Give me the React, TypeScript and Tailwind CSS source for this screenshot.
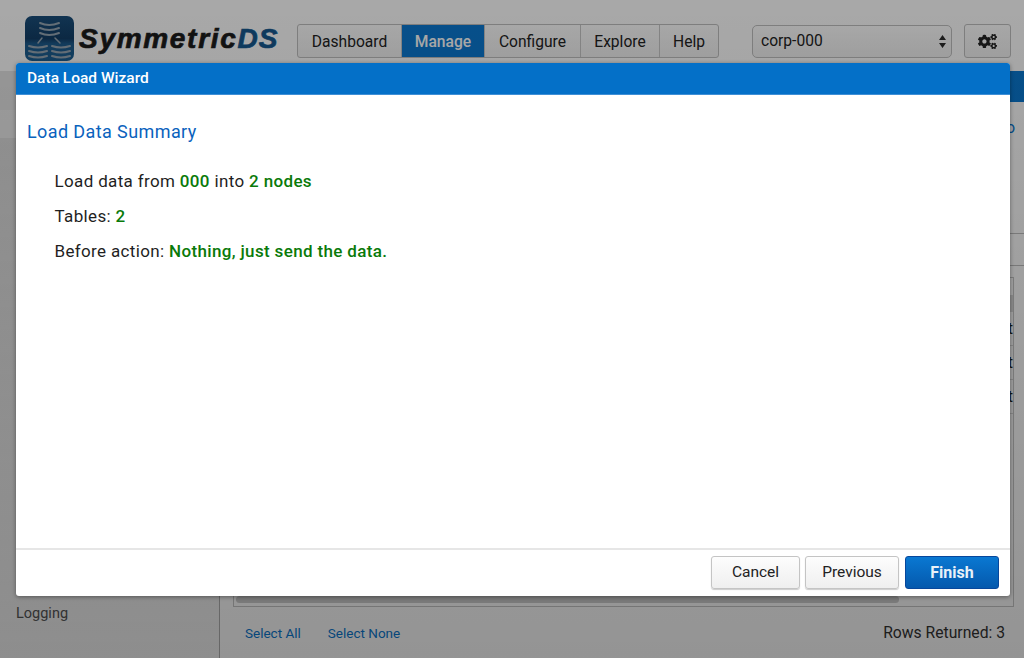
import { FaCogs } from "react-icons/fa";

const NAV_ITEMS = [
  { label: "Dashboard", width: "w-[104px]" },
  { label: "Manage", width: "w-[83px]" },
  { label: "Configure", width: "w-[96px]" },
  { label: "Explore", width: "w-[79px]" },
  { label: "Help", width: "w-[58px]" },
];

function LogoMark() {
  return (
    <svg width="49" height="45" viewBox="0 0 49 45" className="shrink-0">
      <defs>
        <linearGradient id="logoBg" x1="0" y1="0" x2="0" y2="1">
          <stop offset="0" stopColor="#1a4f7c" />
          <stop offset="0.5" stopColor="#123d66" />
          <stop offset="0.62" stopColor="#1d5b8c" />
          <stop offset="1" stopColor="#1c5f92" />
        </linearGradient>
      </defs>
      <rect x="0" y="0" width="49" height="45" rx="7" fill="url(#logoBg)" />
      <g fill="none" stroke="#97a7b4" strokeWidth="2" strokeLinecap="round">
        <path d="M15 7q9 4 19 0M15 12q9 4 19 0M15 17q9 4 19 0" />
        <path d="M4 30q9 3 18 0M4 35q9 3 18 0M4 40q9 3 18 0" />
        <path d="M27 30q9 3 18 0M27 35q9 3 18 0M27 40q9 3 18 0" />
        <path d="M17 22l-4 5M30 22l5 5" strokeWidth="1.5" />
      </g>
    </svg>
  );
}

function SelectArrows() {
  return (
    <svg width="7" height="13" viewBox="0 0 7 13" className="shrink-0">
      <path d="M3.5 0L7 5H0zM3.5 13L0 8h7z" fill="#2b2b2b" />
    </svg>
  );
}

function Button({ label, primary }: { label: string; primary?: boolean }) {
  return (
    <button
      className={
        primary
          ? "h-[33px] w-[94px] rounded-[3px] border border-[#07479c] bg-gradient-to-b from-[#0a78d2] to-[#0559ad] pt-[1px] text-[16px] font-bold text-[#e8f1f8]"
          : "h-[33px] w-full rounded-[3px] border border-[#c4c4c4] bg-gradient-to-b from-[#fdfdfd] to-[#efefef] pt-[1px] text-[15.5px] text-[#222] shadow-[0_1px_1px_rgba(0,0,0,0.2)]"
      }
    >
      {label}
    </button>
  );
}

export default function App() {
  return (
    <div className="relative h-[658px] w-[1024px] overflow-hidden bg-white font-['Roboto',sans-serif] text-[#222]">
      <header className="flex h-[71px] items-start pl-[25px] pt-[16px]">
        <LogoMark />
        <div className="ml-[5px] mt-[5px] w-[218px] whitespace-nowrap font-['Liberation_Sans',sans-serif] text-[28px] leading-[36px] font-bold italic [-webkit-text-stroke:0.7px_currentColor]">
          <span className="tracking-[1.7px] text-[#1b1b1b]">Symmetric</span>
          <span className="tracking-[1px] text-[#15588f]">DS</span>
        </div>
        <nav className="mt-[8px] flex h-[34px] overflow-hidden rounded-[3px] border border-[#c0c0c0] bg-gradient-to-b from-white to-[#f2f2f2] text-[15.6px]">
          {NAV_ITEMS.map((item) => (
            <div
              key={item.label}
              className={
                item.label === "Manage"
                  ? `flex items-center justify-center border-r border-[#c8c8c8] bg-[#0a79d2] pt-[3px] font-medium text-white ${item.width}`
                  : `flex items-center justify-center border-r border-[#c8c8c8] pt-[3px] last:border-r-0 ${item.width}`
              }
            >
              {item.label}
            </div>
          ))}
        </nav>
        <div className="ml-[33px] mt-[9px] flex h-[33px] w-[200px] items-center justify-between rounded-[5px] border border-[#c0c0c0] bg-gradient-to-b from-white to-[#f2f2f2] pl-[8px] pr-[5px] text-[15.6px]">
          <span className="pt-[1px]">corp-000</span>
          <SelectArrows />
        </div>
        <div className="ml-[12px] mt-[8px] flex h-[34px] w-[47px] items-center justify-center rounded-[3px] border border-[#c0c0c0] bg-gradient-to-b from-white to-[#f2f2f2]">
          <FaCogs size={19} color="#222" />
        </div>
      </header>

      <div className="flex h-[587px]">
        <aside className="flex w-[220px] shrink-0 flex-col border-r border-[#b0b0b0]">
          <div className="h-[39px] bg-[#e5e5e5]" />
          <div className="h-[28px] bg-[#ececec]" />
          <div className="flex-1 bg-gradient-to-b from-[#dedede] to-[#f4f4f4] pl-[16px] pt-[466px]">
            <div className="text-[14.5px] leading-[20px] text-[#555]">Logging</div>
          </div>
        </aside>
        <main className="flex min-w-0 flex-1 flex-col">
          <div className="h-[31px] shrink-0 bg-[#0a79d2]" />
          <div className="flex justify-end pr-[9px] pt-[16px] text-[16px] leading-[20px] text-[#0a79d2]">o</div>
          <div className="mt-[95px] h-[33px] border-y border-[#c0c0c0]" />
          <section className="ml-[13px] mr-[10px] mt-[11px] flex h-[330px] flex-col border border-[#c8c8c8]">
            <div className="h-[17px]" />
            <div className="h-[17px] bg-[#dcdcdc]" />
            <div className="flex h-[34px] items-center justify-end border-b border-[#d8d8d8] pt-[1px] text-[17px]">t</div>
            <div className="flex h-[34px] items-center justify-end border-b border-[#d8d8d8] pt-[1px] text-[17px]">t</div>
            <div className="flex h-[34px] items-center justify-end border-b border-[#d8d8d8] pt-[1px] text-[17px]">t</div>
            <div className="mt-auto mb-[3px] ml-[2px] h-[7px] w-[663px] rounded-[4px] bg-[#cfcfcf]" />
          </section>
          <footer className="mt-[16px] flex items-center justify-between pl-[25px] pr-[19px] text-[13.5px] leading-[20px]">
            <div className="flex gap-[27px] text-[#0a79d2]">
              <span>Select All</span>
              <span>Select None</span>
            </div>
            <span className="text-[15.7px] text-[#333]">Rows Returned: 3</span>
          </footer>
        </main>
      </div>

      <div className="absolute inset-0 bg-gradient-to-b from-[rgba(0,0,0,0.34)] to-[rgba(0,0,0,0.42)]" />

      <div className="absolute left-[16px] top-[63px] flex h-[533px] w-[994px] flex-col overflow-hidden rounded-[3px] bg-white shadow-[0_1px_4px_rgba(0,0,0,0.4)]">
        <div className="flex h-[32px] shrink-0 items-center border-b border-[#3f8fd6] bg-[#0470c8] pl-[11px] pt-[1px] text-[15.5px] font-medium text-white">
          Data Load Wizard
        </div>
        <div className="min-h-0 flex-1 pl-[11px] pt-[25px]">
          <h2 className="text-[18px] leading-[24px] tracking-[0.4px] text-[#0a62bd]">Load Data Summary</h2>
          <div className="mt-[25px] flex flex-col gap-[11px] pl-[27.5px] text-[17px] leading-[24px] tracking-[0.35px] text-[#1f1f1f]">
            <p>
              Load data from <b className="font-medium text-[#0a7a0a]">000</b> into{" "}
              <b className="font-medium text-[#0a7a0a]">2 nodes</b>
            </p>
            <p>
              Tables: <b className="font-medium text-[#0a7a0a]">2</b>
            </p>
            <p>
              Before action: <b className="font-medium text-[#0a7a0a]">Nothing, just send the data.</b>
            </p>
          </div>
        </div>
        <div className="flex h-[48px] shrink-0 items-start justify-end gap-[5px] border-t-2 border-[#e6e6e6] pr-[11px] pt-[6px]">
          <div className="w-[89px]">
            <Button label="Cancel" />
          </div>
          <div className="w-[94px]">
            <Button label="Previous" />
          </div>
          <div className="ml-[1px]">
            <Button label="Finish" primary />
          </div>
        </div>
      </div>
    </div>
  );
}
